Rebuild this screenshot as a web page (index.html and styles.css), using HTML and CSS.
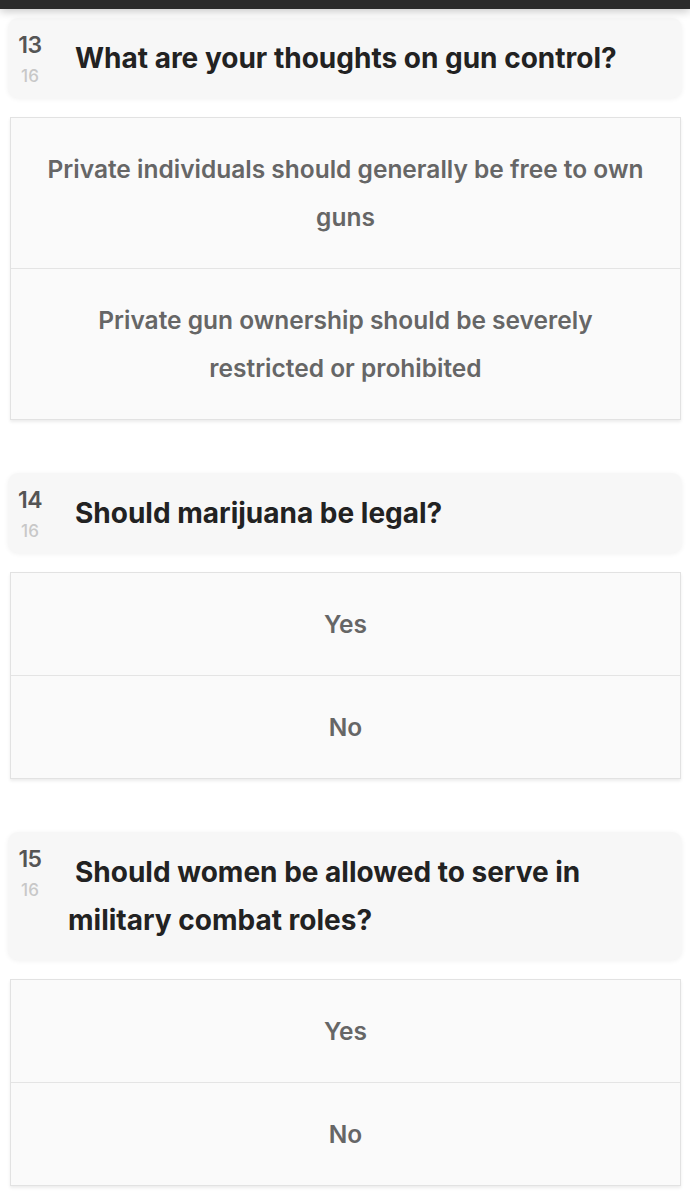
FILE: index.html
```html
<!DOCTYPE html>
<html lang="en">
<head>
<meta charset="utf-8">
<title>Survey</title>
<link rel="stylesheet" href="styles.css">
</head>
<body>
<div class="topbar"></div>
<main class="survey">
  <section class="block">
    <div class="question">
      <div class="num"><span class="cur">13</span><span class="total">16</span></div>
      <h2 class="qtext">What are your thoughts on gun control?</h2>
    </div>
    <div class="options">
      <div class="option">Private individuals should generally be free to own guns</div>
      <div class="option">Private gun ownership should be severely restricted or prohibited</div>
    </div>
  </section>
  <section class="block">
    <div class="question">
      <div class="num"><span class="cur">14</span><span class="total">16</span></div>
      <h2 class="qtext">Should marijuana be legal?</h2>
    </div>
    <div class="options">
      <div class="option">Yes</div>
      <div class="option">No</div>
    </div>
  </section>
  <section class="block">
    <div class="question">
      <div class="num"><span class="cur">15</span><span class="total">16</span></div>
      <h2 class="qtext">Should women be allowed to serve in military combat roles?</h2>
    </div>
    <div class="options">
      <div class="option">Yes</div>
      <div class="option">No</div>
    </div>
  </section>
</main>
</body>
</html>
```
FILE: styles.css
```css
html, body {
  margin: 0;
  padding: 0;
  background: #ffffff;
}
body {
  font-family: Inter, Roboto, "Liberation Sans", sans-serif;
  width: 690px;
  height: 1204px;
  overflow: hidden;
}
.topbar {
  height: 9px;
  background: #2b2b2b;
  box-shadow: 0 2px 10px rgba(0, 0, 0, 0.25);
  position: relative;
  z-index: 2;
}
.survey {
  padding: 9px 8px 0 8px;
}
.block {
  margin-bottom: 53px;
}
.question {
  display: flex;
  align-items: flex-start;
  background: #f7f7f7;
  border-radius: 10px;
  box-shadow: 0 1px 5px rgba(0, 0, 0, 0.06);
  padding: 16px 16px 16px 2px;
}
.num {
  width: 40px;
  height: 48px;
  margin-right: 18px;
  flex: none;
  display: flex;
  flex-direction: column;
  align-items: center;
  margin-top: -3px;
}
.cur {
  font-size: 23px;
  line-height: 28px;
  font-weight: 600;
  color: #555555;
  letter-spacing: -0.5px;
}
.total {
  font-size: 17px;
  line-height: 22px;
  font-weight: 500;
  color: #c8c8c8;
  margin-top: 6px;
}
.qtext {
  margin: 0;
  font-size: 28px;
  line-height: 48px;
  font-weight: 700;
  color: #222222;
  text-indent: 7px;
}
.options {
  margin: 19px 1px 0 2px;
  border: 1px solid #e2e2e2;
  background: #fafafa;
  box-shadow: 0 2px 3px rgba(0, 0, 0, 0.08);
}
.option {
  padding: 27px 32px 27px 32px;
  line-height: 48px;
  font-size: 24.5px;
  font-weight: 600;
  color: #666666;
  text-align: center;
}
.option + .option {
  border-top: 1px solid #e4e4e4;
}
```
